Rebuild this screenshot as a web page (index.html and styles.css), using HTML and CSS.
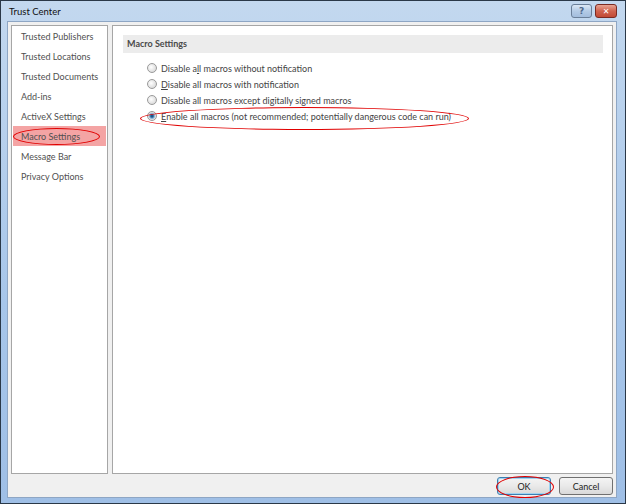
FILE: index.html
```html
<!DOCTYPE html>
<html lang="en">
<head>
    <meta charset="UTF-8">
    <title>Trust Center</title>
    <link rel="stylesheet" href="styles.css">
</head>
<body>
    <div class="window">
        <div class="titlebar">
            <span class="title">Trust Center</span>
            <span class="cap-btn help-btn">?</span>
            <span class="cap-btn close-btn">&#x2715;</span>
        </div>

        <div class="client">
            <div class="panels">
                <ul class="nav">
                    <li>Trusted Publishers</li>
                    <li>Trusted Locations</li>
                    <li>Trusted Documents</li>
                    <li>Add-ins</li>
                    <li>ActiveX Settings</li>
                    <li class="active">Macro Settings<span class="mark nav-mark"></span></li>
                    <li>Message Bar</li>
                    <li>Privacy Options</li>
                </ul>

                <div class="content">
                    <div class="section-head">Macro Settings</div>
                    <div class="options">
                        <label class="option"><span class="radio"></span>Disable a<u>l</u>l macros without notification</label>
                        <label class="option"><span class="radio"></span><u>D</u>isable all macros with notification</label>
                        <label class="option"><span class="radio"></span>Disable all macros except di<u>g</u>itally signed macros</label>
                        <label class="option"><span class="radio checked"></span><u>E</u>nable all macros (not recommended; potentially dangerous code can run)<span class="mark option-mark"></span></label>
                    </div>
                </div>
            </div>

            <div class="buttons">
                <button class="btn default">OK<span class="mark ok-mark"></span></button>
                <button class="btn">Cancel</button>
            </div>
        </div>
    </div>
</body>
</html>
```

FILE: styles.css
```css
html, body {
    margin: 0;
    padding: 0;
    background: #fff;
}
body {
    font-family: 'Lato', 'Noto Sans', sans-serif;
    font-size: 9px;
    color: #444;
}
.window {
    position: relative;
    box-sizing: border-box;
    width: 626px;
    height: 504px;
    border: 1px solid #2a3848;
    background: linear-gradient(to bottom, #c3d8ef, #a7c6ea 60%, #9fbfe6);
    padding: 0 8px 5px 6px;
    display: flex;
    flex-direction: column;
}
.titlebar {
    height: 20px;
    display: flex;
    align-items: center;
    gap: 3px;
}
.title {
    flex: 1;
    padding-left: 2px;
    font-size: 9.5px;
    color: #111;
}
.cap-btn {
    box-sizing: border-box;
    height: 14px;
    display: flex;
    align-items: center;
    justify-content: center;
    border: 1px solid #6a7f99;
    border-radius: 3px;
    font-family: 'DejaVu Sans', sans-serif;
    font-weight: bold;
    color: #fff;
}
.help-btn {
    width: 21px;
    background: linear-gradient(to bottom, #dce8f6, #b4cbe6 50%, #a3bddd);
    color: #4f6a8c;
    font-size: 9px;
}
.close-btn {
    width: 22px;
    border-color: #7a2a22;
    background: linear-gradient(to bottom, #e8a493, #d0634f 50%, #c24a36);
    font-size: 8px;
}
.client {
    flex: 1;
    display: flex;
    flex-direction: column;
    background: #f0f0f0;
    border: 1px solid #8ea6c4;
    padding: 3px 3px 2px 3px;
}
.panels {
    flex: 1;
    display: flex;
    gap: 4px;
}
.nav {
    width: 97px;
    box-sizing: border-box;
    margin: 0;
    padding: 0 1px;
    list-style: none;
    background: #fff;
    border: 1px solid #a6a6a6;
}
.nav li {
    position: relative;
    height: 20px;
    line-height: 22px;
    padding-left: 8px;
    white-space: nowrap;
    color: #505050;
}
.nav li.active {
    background: #f4a4a4;
}
.content {
    flex: 1;
    background: #fff;
    border: 1px solid #a6a6a6;
    padding: 9px 9px 9px 10px;
}
.section-head {
    height: 18px;
    line-height: 18px;
    padding-left: 4px;
    background: #ececec;
    font-weight: bold;
    color: #4a4a4a;
}
.options {
    margin-top: 7px;
    padding-left: 24px;
}
.option {
    position: relative;
    display: flex;
    align-items: center;
    height: 16px;
    white-space: nowrap;
}
.radio {
    box-sizing: border-box;
    width: 10px;
    height: 10px;
    margin-right: 4px;
    border-radius: 50%;
    border: 1px solid #9a9a9a;
    background: radial-gradient(circle at 40% 40%, #fff, #e2e2e2 60%, #cfcfcf);
}
.radio.checked {
    background: radial-gradient(circle, #13406a 0, #2d6fa6 25%, #8fb5d6 45%, #e6e6e6 65%);
}
.buttons {
    display: flex;
    justify-content: flex-end;
    gap: 8px;
    padding-top: 3px;
}
.btn {
    position: relative;
    box-sizing: border-box;
    width: 54px;
    height: 18px;
    padding: 0;
    border: 1px solid #707070;
    border-radius: 3px;
    background: linear-gradient(to bottom, #f4f4f4, #e9e9e9 50%, #d9d9d9);
    font-family: 'Lato', 'Noto Sans', sans-serif;
    font-size: 9px;
    color: #222;
}
.btn.default {
    border-color: #3c7fb1;
    box-shadow: inset 0 0 0 1px #9fd4f2;
}
.mark {
    position: absolute;
    box-sizing: border-box;
    border: 1px solid #e00000;
    border-radius: 50%;
    pointer-events: none;
}
.nav-mark {
    left: 0;
    top: 2px;
    width: 87px;
    height: 17px;
}
.option-mark {
    left: -7px;
    top: -1px;
    width: 329px;
    height: 23px;
}
.ok-mark {
    left: -2px;
    top: -2px;
    width: 58px;
    height: 22px;
}
```
